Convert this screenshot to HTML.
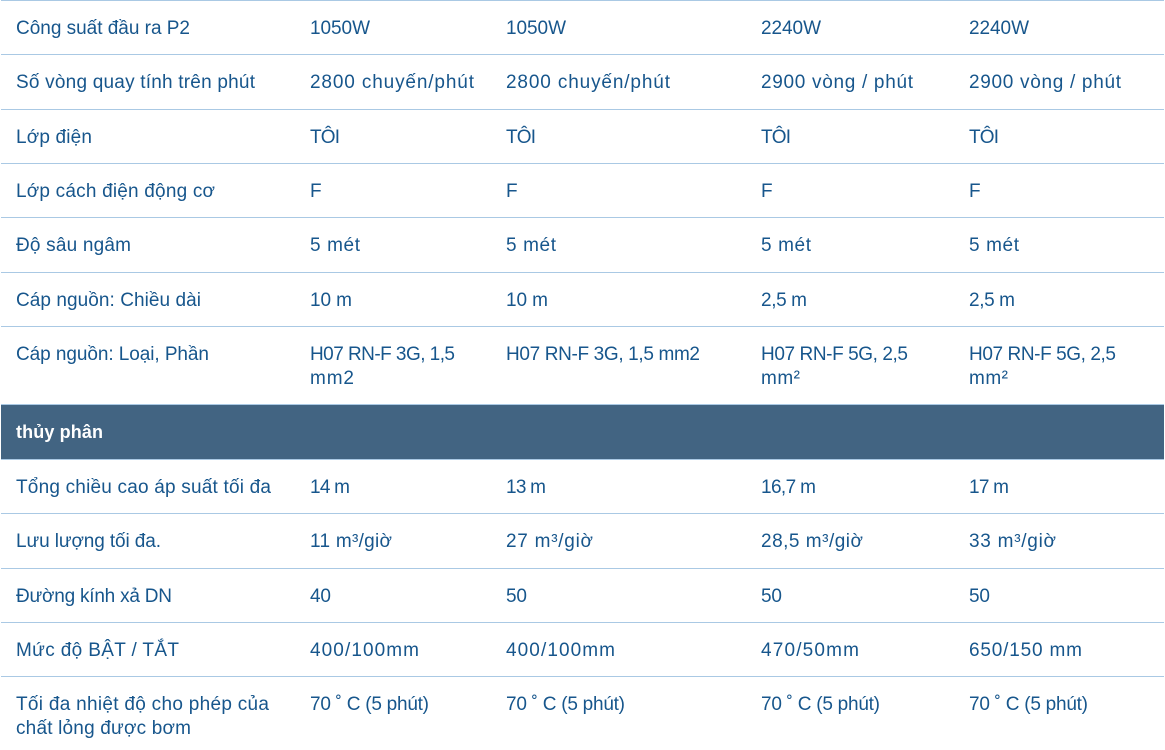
<!DOCTYPE html>
<html lang="vi"><head><meta charset="utf-8"><title>Bảng thông số</title>
<style>
html,body{margin:0;padding:0;background:#fff;width:1165px;height:750px;overflow:hidden}
svg{display:block}
text{font-family:"Liberation Sans",sans-serif;font-size:19px;fill:#17568c}
.h{fill:#fff;font-weight:bold;font-size:18px}
rect.l{fill:#aac9e4}
</style></head><body>
<svg width="1165" height="750" viewBox="0 0 1165 750" xmlns="http://www.w3.org/2000/svg">
<rect x="1" y="405" width="1163" height="54" fill="#426482"/>
<rect class="l" x="1" y="0" width="1163" height="1"/>
<rect class="l" x="1" y="54" width="1163" height="1"/>
<rect class="l" x="1" y="109" width="1163" height="1"/>
<rect class="l" x="1" y="163" width="1163" height="1"/>
<rect class="l" x="1" y="217" width="1163" height="1"/>
<rect class="l" x="1" y="272" width="1163" height="1"/>
<rect class="l" x="1" y="326" width="1163" height="1"/>
<rect class="l" x="1" y="404" width="1163" height="1"/>
<rect class="l" x="1" y="459" width="1163" height="1"/>
<rect class="l" x="1" y="513" width="1163" height="1"/>
<rect class="l" x="1" y="568" width="1163" height="1"/>
<rect class="l" x="1" y="622" width="1163" height="1"/>
<rect class="l" x="1" y="676" width="1163" height="1"/>

<text x="16" y="34" textLength="174">Công suất đầu ra P2</text>
<text x="310" y="34" textLength="60">1050W</text><text x="506" y="34" textLength="60">1050W</text><text x="761" y="34" textLength="60">2240W</text><text x="969" y="34" textLength="60">2240W</text>

<text x="16" y="88" textLength="239">Số vòng quay tính trên phút</text>
<text x="310" y="88" textLength="164">2800 chuyến/phút</text><text x="506" y="88" textLength="164">2800 chuyến/phút</text><text x="761" y="88" textLength="152">2900 vòng / phút</text><text x="969" y="88" textLength="152">2900 vòng / phút</text>

<text x="16" y="143" textLength="76">Lớp điện</text>
<text x="310" y="143" textLength="30">TÔI</text><text x="506" y="143" textLength="30">TÔI</text><text x="761" y="143" textLength="30">TÔI</text><text x="969" y="143" textLength="30">TÔI</text>

<text x="16" y="197" textLength="199">Lớp cách điện động cơ</text>
<text x="310" y="197">F</text><text x="506" y="197">F</text><text x="761" y="197">F</text><text x="969" y="197">F</text>

<text x="16" y="251" textLength="115">Độ sâu ngâm</text>
<text x="310" y="251" textLength="50">5 mét</text><text x="506" y="251" textLength="50">5 mét</text><text x="761" y="251" textLength="50">5 mét</text><text x="969" y="251" textLength="50">5 mét</text>

<text x="16" y="306" textLength="185">Cáp nguồn: Chiều dài</text>
<text x="310" y="306" textLength="42">10 m</text><text x="506" y="306" textLength="42">10 m</text><text x="761" y="306" textLength="46">2,5 m</text><text x="969" y="306" textLength="46">2,5 m</text>

<text x="16" y="360" textLength="193">Cáp nguồn: Loại, Phần</text>
<text x="310" y="360" textLength="145">H07 RN-F 3G, 1,5</text><text x="310" y="384" textLength="44">mm2</text>
<text x="506" y="360" textLength="194">H07 RN-F 3G, 1,5 mm2</text>
<text x="761" y="360" textLength="147">H07 RN-F 5G, 2,5</text><text x="761" y="384" textLength="39">mm²</text>
<text x="969" y="360" textLength="147">H07 RN-F 5G, 2,5</text><text x="969" y="384" textLength="39">mm²</text>

<text class="h" x="16" y="438" textLength="87">thủy phân</text>

<text x="16" y="493" textLength="255">Tổng chiều cao áp suất tối đa</text>
<text x="310" y="493" textLength="40">14 m</text><text x="506" y="493" textLength="40">13 m</text><text x="761" y="493" textLength="55">16,7 m</text><text x="969" y="493" textLength="40">17 m</text>

<text x="16" y="547" textLength="145">Lưu lượng tối đa.</text>
<text x="310" y="547" textLength="82">11 m³/giờ</text><text x="506" y="547" textLength="87">27 m³/giờ</text><text x="761" y="547" textLength="102">28,5 m³/giờ</text><text x="969" y="547" textLength="87">33 m³/giờ</text>

<text x="16" y="602" textLength="156">Đường kính xả DN</text>
<text x="310" y="602" textLength="21">40</text><text x="506" y="602" textLength="21">50</text><text x="761" y="602" textLength="21">50</text><text x="969" y="602" textLength="21">50</text>

<text x="16" y="656" textLength="163">Mức độ BẬT / TẮT</text>
<text x="310" y="656" textLength="109">400/100mm</text><text x="506" y="656" textLength="109">400/100mm</text><text x="761" y="656" textLength="98">470/50mm</text><text x="969" y="656" textLength="113">650/150 mm</text>

<text x="16" y="710" textLength="253">Tối đa nhiệt độ cho phép của</text>
<text x="16" y="734" textLength="175">chất lỏng được bơm</text>
<text x="310" y="710" textLength="119">70 ˚ C (5 phút)</text><text x="506" y="710" textLength="119">70 ˚ C (5 phút)</text><text x="761" y="710" textLength="119">70 ˚ C (5 phút)</text><text x="969" y="710" textLength="119">70 ˚ C (5 phút)</text>
</svg>
</body></html>
